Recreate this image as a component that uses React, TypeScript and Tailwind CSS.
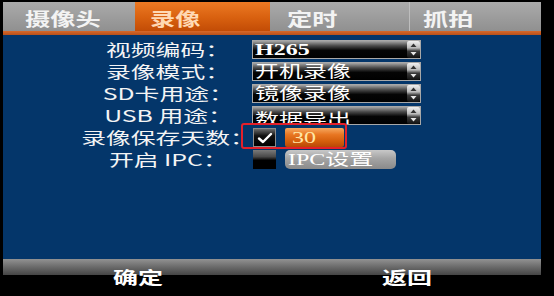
import React from "react";

const labelCls =
  "inline-block origin-center scale-x-[1.55] whitespace-nowrap text-[16px] leading-[19px] text-[#f4f4f4]";
const valCls =
  "inline-block origin-left scale-x-[1.5] whitespace-nowrap font-['Liberation_Serif','Noto_Sans_CJK_SC',serif] text-[16px] leading-[17px] text-white";

function Arrows() {
  return (
    <div className="w-[13px] h-full bg-[linear-gradient(to_bottom,#f0f0f0_0%,#bcbcbc_40%,#3a3a3a_60%,#111_100%)] rounded-[2px]">
      <svg width="13" height="17" viewBox="0 0 13 17">
        <polygon points="3.5,6 6.5,2.5 9.5,6" fill="#333" />
        <polygon points="3.5,11 9.5,11 6.5,14.5" fill="#e8e8e8" />
      </svg>
    </div>
  );
}

function Select({ value, clip, bold }: { value: string; clip?: boolean; bold?: boolean }) {
  return (
    <div className="w-[169px] h-[19px] flex border border-[#a8a8a8] bg-[linear-gradient(to_bottom,#a6a6a6_0%,#4a4a4a_28%,#050505_55%,#000_100%)] overflow-hidden">
      <div className="flex-1 flex items-center overflow-hidden pl-[2px]">
        {clip ? (
          <span className={valCls + " translate-y-[4px]"}>{value}</span>
        ) : bold ? (
          <span className={valCls + " font-bold"}>{value}</span>
        ) : (
          <span className={valCls}>{value}</span>
        )}
      </div>
      <Arrows />
    </div>
  );
}

function Label({ text }: { text: string }) {
  return (
    <div className="h-[19px] flex items-center justify-center">
      <span className={labelCls}>{text}</span>
    </div>
  );
}

export default function App() {
  const tabs = [
    { t: "摄像头", w: "w-[132px]", pl: "pl-[22px]", active: false },
    { t: "录像", w: "w-[135px]", pl: "pl-[15px]", active: true },
    { t: "定时", w: "w-[139px]", pl: "pl-[17px]", active: false },
    { t: "抓拍", w: "w-[132px]", pl: "pl-[13px]", active: false },
  ];
  return (
    <div className="w-[554px] h-[296px] bg-black overflow-hidden font-['Noto_Sans_CJK_SC',sans-serif]">
      <div className="ml-[3px] w-[538px] h-full flex flex-col">
        <div className="h-[2px] shrink-0" />
        {/* tabs */}
        <div className="h-[29px] shrink-0 flex">
          {tabs.map((tb, i) => (
            <div
              key={i}
              className={
                tb.w +
                " " +
                tb.pl +
                " h-full flex items-center pt-[3px] " +
                (tb.active
                  ? "bg-[linear-gradient(to_bottom,#ec7a24_0%,#d8600f_55%,#c24c06_100%)]"
                  : "bg-[linear-gradient(to_bottom,#ababab_0%,#9d9d9d_50%,#909090_100%)]") +
                (i === 3 ? " border-l border-[#bdbdbd]" : "")
              }
            >
              <span
                className={
                  "inline-block origin-left scale-x-[1.4] whitespace-nowrap text-[18px] leading-[20px] font-bold " +
                  (tb.active ? "text-[#ffd9b4]" : "text-[#f3f3f3]")
                }
              >
                {tb.t}
              </span>
            </div>
          ))}
        </div>
        <div className="h-[4px] shrink-0 bg-[linear-gradient(to_bottom,#d8692a,#b8501a)]" />
        {/* main */}
        <div className="flex-1 bg-[#04366a] pt-[5px] pl-[82px]">
          <div className="grid grid-cols-[167px_auto] gap-y-[3px] justify-start">
            <Label text="视频编码：" />
            <Select value="H265" bold />
            <Label text="录像模式：" />
            <Select value="开机录像" />
            <Label text="SD卡用途：" />
            <Select value="镜像录像" />
            <Label text="USB 用途：" />
            <Select value="数据导出" clip />
            <Label text="录像保存天数：" />
            <div className="relative h-[19px] flex items-center gap-[9px] pl-px">
              <div className="w-[23px] h-[19px] border border-[#8a8a8a] bg-[linear-gradient(to_bottom,#6a6a6a_0%,#111_40%,#000_100%)] flex items-center justify-center">
                <svg width="16" height="12" viewBox="0 0 16 12">
                  <path d="M2 6.5 L6 10 L14 2" stroke="#ffffff" strokeWidth="2.4" fill="none" strokeLinecap="round" strokeLinejoin="round" />
                </svg>
              </div>
              <div className="w-[59px] h-[19px] rounded-[2px] bg-[linear-gradient(to_bottom,#f6a860_0%,#e87622_35%,#d45e0c_70%,#b84806_100%)] flex items-center pl-[7px]">
                <span className="inline-block origin-left scale-x-[1.5] font-['Liberation_Serif',serif] text-[16px] leading-[17px] text-[#ffe6a6]">
                  30
                </span>
              </div>
              <div className="absolute left-[-11px] top-[-5px] w-[106px] h-[26px] border-2 border-[#e4202a] rounded-[3px]" />
            </div>
            <Label text="开启 IPC：" />
            <div className="h-[19px] flex items-center gap-[9px] pl-px">
              <div className="w-[23px] h-[19px] bg-[linear-gradient(to_bottom,#7a7a7a_0%,#4a4a4a_35%,#000_55%,#000_100%)]" />
              <div className="w-[111px] h-[19px] rounded-[5px] bg-[linear-gradient(to_bottom,#c8c8c8_0%,#a4a4a4_45%,#8a8a8a_100%)] flex items-center pl-[3px]">
                <span className={valCls + " text-[#fafafa]"}>IPC设置</span>
              </div>
            </div>
          </div>
        </div>
        {/* bottom */}
        <div className="h-[37px] shrink-0 flex bg-[linear-gradient(to_bottom,#929292_0px,#6a6a6a_8px,#454545_16px,#000_16px,#000_100%)]">
          <div className="flex-1 flex justify-center pt-[9px]">
            <span className="inline-block origin-center scale-x-[1.47] text-[17px] leading-[18px] font-bold text-white">确定</span>
          </div>
          <div className="flex-1 flex justify-center pt-[9px]">
            <span className="inline-block origin-center scale-x-[1.47] text-[17px] leading-[18px] font-bold text-white">返回</span>
          </div>
        </div>
      </div>
    </div>
  );
}
